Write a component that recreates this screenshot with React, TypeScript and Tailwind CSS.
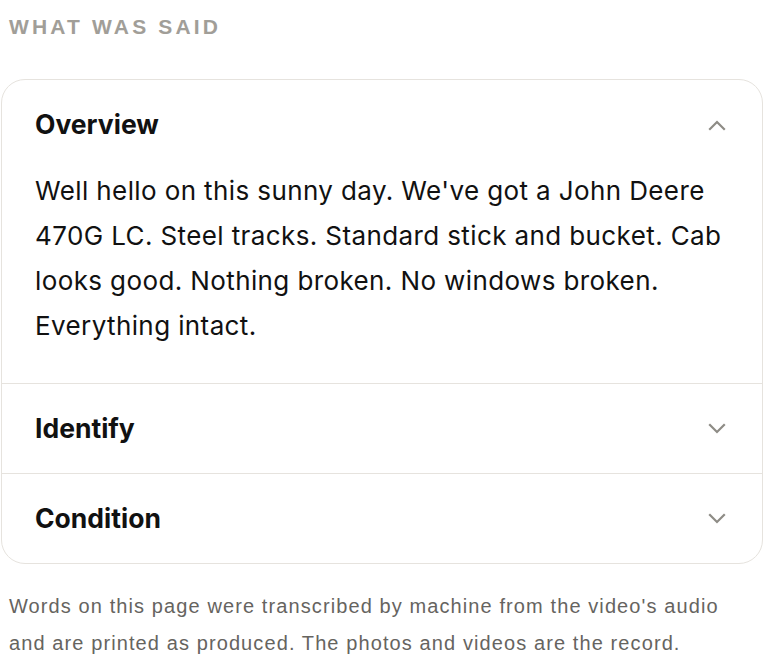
import React from "react";

function Chevron({ up }: { up?: boolean }) {
  return (
    <svg width="20" height="12" viewBox="0 0 20 12" fill="none" stroke="#8e8c86" strokeWidth="2.2" strokeLinecap="square" strokeLinejoin="miter" className="shrink-0">
      {up ? <path d="M3 10l7-7 7 7" /> : <path d="M3 2l7 7 7-7" />}
    </svg>
  );
}

function Row({ title, open, children }: { title: string; open?: boolean; children?: React.ReactNode }) {
  return (
    <div className="border-t border-[#e6e3de] first:border-t-0">
      <div className="flex items-center justify-between pl-[33px] pr-[35px] py-[31px]">
        <span className="text-[26.5px] leading-[27px] font-bold text-[#111111]" style={{ fontFamily: "Inter, sans-serif" }}>{title}</span>
        <Chevron up={open} />
      </div>
      {open && (
        <div className="pl-[33px] pr-[28px] pb-[35px] -mt-px text-[26px] leading-[45px] tracking-[0.015em] text-[#111111]" style={{ fontFamily: "Inter, sans-serif" }}>
          {children}
        </div>
      )}
    </div>
  );
}

export default function App() {
  return (
    <div className="w-[764px] h-[660px] bg-white overflow-hidden" style={{ fontFamily: "'Liberation Sans', Arial, sans-serif" }}>
      <div className="px-[9px] pt-[15px] text-[21px] leading-[24px] font-bold tracking-[0.15em] text-[#a19e98]">WHAT WAS SAID</div>
      <div className="mx-px mt-[40px] border border-[#e6e3de] rounded-[24px] overflow-hidden">
        <Row title="Overview" open>
          Well hello on this sunny day. We've got a John Deere 470G LC. Steel tracks. Standard stick and bucket. Cab looks good. Nothing broken. No windows broken. Everything intact.
        </Row>
        <Row title="Identify" />
        <Row title="Condition" />
      </div>
      <p className="px-[9px] pr-[20px] mt-[24px] text-[20px] leading-[37px] tracking-[0.055em] text-[#66645f]">
        Words on this page were transcribed by machine from the video's audio and are printed as produced. The photos and videos are the record.
      </p>
    </div>
  );
}
